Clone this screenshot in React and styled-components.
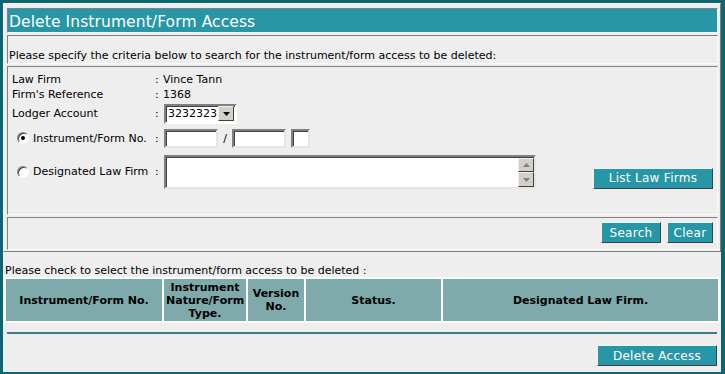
import React from "react";
import styled, { createGlobalStyle } from "styled-components";

const GlobalStyle = createGlobalStyle`
  html, body {
    margin: 0;
    padding: 0;
    background: #0c6770;
  }
  body {
    font-family: "DejaVu Sans", Verdana, sans-serif;
    font-size: 11px;
    color: #000;
  }
`;

const Page = styled.div`
  margin: 3px 4px 0 3px;
  height: 369px;
  background: #eeeeee;
  box-sizing: border-box;
`;

const Frame = styled.div`
  border: 1px solid;
  border-color: #f8f8f8 #808080 #808080 #f8f8f8;
  padding: 4px 2px 1px 3px;
  height: 249px;
  box-sizing: border-box;
  display: flex;
  flex-direction: column;
  gap: 2px;
`;

const TitleBar = styled.div`
  height: 25px;
  box-sizing: border-box;
  background: #2796a6;
  border: 1px solid;
  border-color: #808080 #f4f4f4 #f4f4f4 #808080;
  color: #fff;
  font-size: 15.5px;
  letter-spacing: 0.1px;
  line-height: 24px;
  padding: 1px 0 0 1px;
`;

const Inset = styled.div`
  border: 1px solid;
  border-color: #808080 #fafafa #fafafa #808080;
  box-sizing: border-box;
  height: ${(p) => p.h}px;
`;

const Intro = styled(Inset)`
  padding: 13px 0 0 1px;
  line-height: 13px;
`;

const Criteria = styled(Inset)`
  padding: 5px 4px 0 4px;
`;

const Row = styled.div`
  display: grid;
  grid-template-columns: 143px 8px 1fr;
  align-items: center;
  height: ${(p) => p.h}px;
`;

const Label = styled.div`
  display: flex;
  align-items: center;
  gap: 4px;
  padding-left: ${(p) => (p.radio ? 5 : 0)}px;
`;

const Radio = styled.span`
  width: 12px;
  height: 12px;
  box-sizing: border-box;
  border-radius: 50%;
  border: 1px solid;
  border-color: #808080 #fff #fff #808080;
  background: #fff;
  box-shadow: inset 1px 1px 0 #404040;
  position: relative;
  &::after {
    content: "";
    display: ${(p) => (p.checked ? "block" : "none")};
    position: absolute;
    left: 3px;
    top: 3px;
    width: 4px;
    height: 4px;
    border-radius: 50%;
    background: #000;
  }
`;

const Value = styled.div`
  display: flex;
  align-items: ${(p) => p.align || "center"};
  justify-content: ${(p) => p.justify || "flex-start"};
`;

const Select = styled.div`
  margin-left: 1px;
  display: flex;
  align-items: center;
  width: 73px;
  height: 20px;
  box-sizing: border-box;
  border: 2px solid;
  border-color: #808080 #fff #fff #808080;
  box-shadow: inset 1px 1px 0 #404040;
  background: #fff;
  padding: 1px 1px 1px 2px;
  font-size: 11px;
`;

const SelectText = styled.span`
  flex: 1;
`;

const ArrowBtn = styled.span`
  width: 16px;
  height: 15px;
  box-sizing: border-box;
  background: #d4d0c8;
  border: 1px solid;
  border-color: #f0f0f0 #404040 #404040 #f0f0f0;
  display: flex;
  align-items: center;
  justify-content: center;
`;

const Field = styled.div`
  width: ${(p) => p.w}px;
  height: 19px;
  box-sizing: border-box;
  border: 2px solid;
  border-color: #808080 #e8e6e0 #e8e6e0 #808080;
  box-shadow: inset 1px 1px 0 #404040;
  background: #fff;
  margin-left: ${(p) => p.ml || 0}px;
`;

const Slash = styled.span`
  width: 14px;
  text-align: center;
`;

const Memo = styled.div`
  margin-left: 1px;
  width: 372px;
  height: 34px;
  box-sizing: border-box;
  border: 2px solid;
  border-color: #808080 #e8e6e0 #e8e6e0 #808080;
  box-shadow: inset 1px 1px 0 #404040;
  background: #fff;
  display: flex;
  justify-content: flex-end;
`;

const ScrollCol = styled.div`
  display: flex;
  flex-direction: column;
  width: 16px;
  padding-top: 1px;
`;

const Button = styled.button`
  height: 21px;
  width: ${(p) => p.w}px;
  box-sizing: border-box;
  background: #2796a6;
  color: #fff;
  border: 1px solid;
  border-color: #f4f4f4 #404040 #404040 #f4f4f4;
  font-family: inherit;
  font-size: 12px;
  padding: 0;
  letter-spacing: 0.3px;
`;

const Actions = styled(Inset)`
  display: flex;
  justify-content: flex-end;
  gap: 6px;
  padding: 4px 4px 0 0;
`;

const Notice = styled.div`
  padding: 12px 0 0 2px;
  line-height: 13px;
`;

const Grid = styled.table`
  margin: 0 0 0 1px;
  width: 716px;
  background: #fff;
  border-spacing: 2px;
  table-layout: fixed;
`;

const Head = styled.th`
  box-sizing: border-box;
  background: #7eaaab;
  height: 42px;
  padding: 0 2px;
  font-size: 11px;
  font-weight: bold;
  line-height: 13px;
  text-align: center;
  width: ${(p) => (p.w ? `${p.w}px` : "auto")};
`;

const Divider = styled.div`
  margin: 9px 4px 0 4px;
  height: 2px;
  background: #3d7d8a;
`;

const Footer = styled.div`
  display: flex;
  justify-content: flex-end;
  padding: 11px 4px 0 0;
`;

const Tri = ({ up, color }) => (
  <svg width="7" height="4" viewBox="0 0 7 4">
    <path d={up ? "M3.5 0L7 4H0Z" : "M0 0H7L3.5 4Z"} fill={color} />
  </svg>
);

export default function App() {
  return (
    <>
      <GlobalStyle />
      <Page>
        <Frame>
          <TitleBar>Delete Instrument/Form Access</TitleBar>
          <Intro h={29}>
            Please specify the criteria below to search for the instrument/form access to be deleted:
          </Intro>
          <Criteria h={151}>
            <Row h={15}>
              <Label>Law Firm</Label>
              <span>:</span>
              <Value>Vince Tann</Value>
            </Row>
            <Row h={15}>
              <Label>Firm's Reference</Label>
              <span>:</span>
              <Value>1368</Value>
            </Row>
            <Row h={24}>
              <Label>Lodger Account</Label>
              <span>:</span>
              <Value>
                <Select>
                  <SelectText>3232323</SelectText>
                  <ArrowBtn>
                    <Tri color="#000" />
                  </ArrowBtn>
                </Select>
              </Value>
            </Row>
            <Row h={25}>
              <Label radio>
                <Radio checked />
                Instrument/Form No.
              </Label>
              <span>:</span>
              <Value>
                <Field w={54} ml={1} />
                <Slash>/</Slash>
                <Field w={54} />
                <Field w={19} ml={5} />
              </Value>
            </Row>
            <Row h={42}>
              <Label radio>
                <Radio />
                Designated Law Firm
              </Label>
              <span>:</span>
              <Value align="flex-end" justify="space-between">
                <Memo>
                  <ScrollCol>
                    <ArrowBtn>
                      <Tri up color="#808080" />
                    </ArrowBtn>
                    <ArrowBtn>
                      <Tri color="#808080" />
                    </ArrowBtn>
                  </ScrollCol>
                </Memo>
                <Button w={120}>List Law Firms</Button>
              </Value>
            </Row>
          </Criteria>
          <Actions h={33}>
            <Button w={60}>Search</Button>
            <Button w={46}>Clear</Button>
          </Actions>
        </Frame>
        <Notice>Please check to select the instrument/form access to be deleted :</Notice>
        <Grid>
          <thead>
            <tr>
              <Head w={156}>Instrument/Form No.</Head>
              <Head w={82}>Instrument Nature/Form Type.</Head>
              <Head w={56}>Version No.</Head>
              <Head w={135}>Status.</Head>
              <Head>Designated Law Firm.</Head>
            </tr>
          </thead>
        </Grid>
        <Divider />
        <Footer>
          <Button w={120}>Delete Access</Button>
        </Footer>
      </Page>
    </>
  );
}
